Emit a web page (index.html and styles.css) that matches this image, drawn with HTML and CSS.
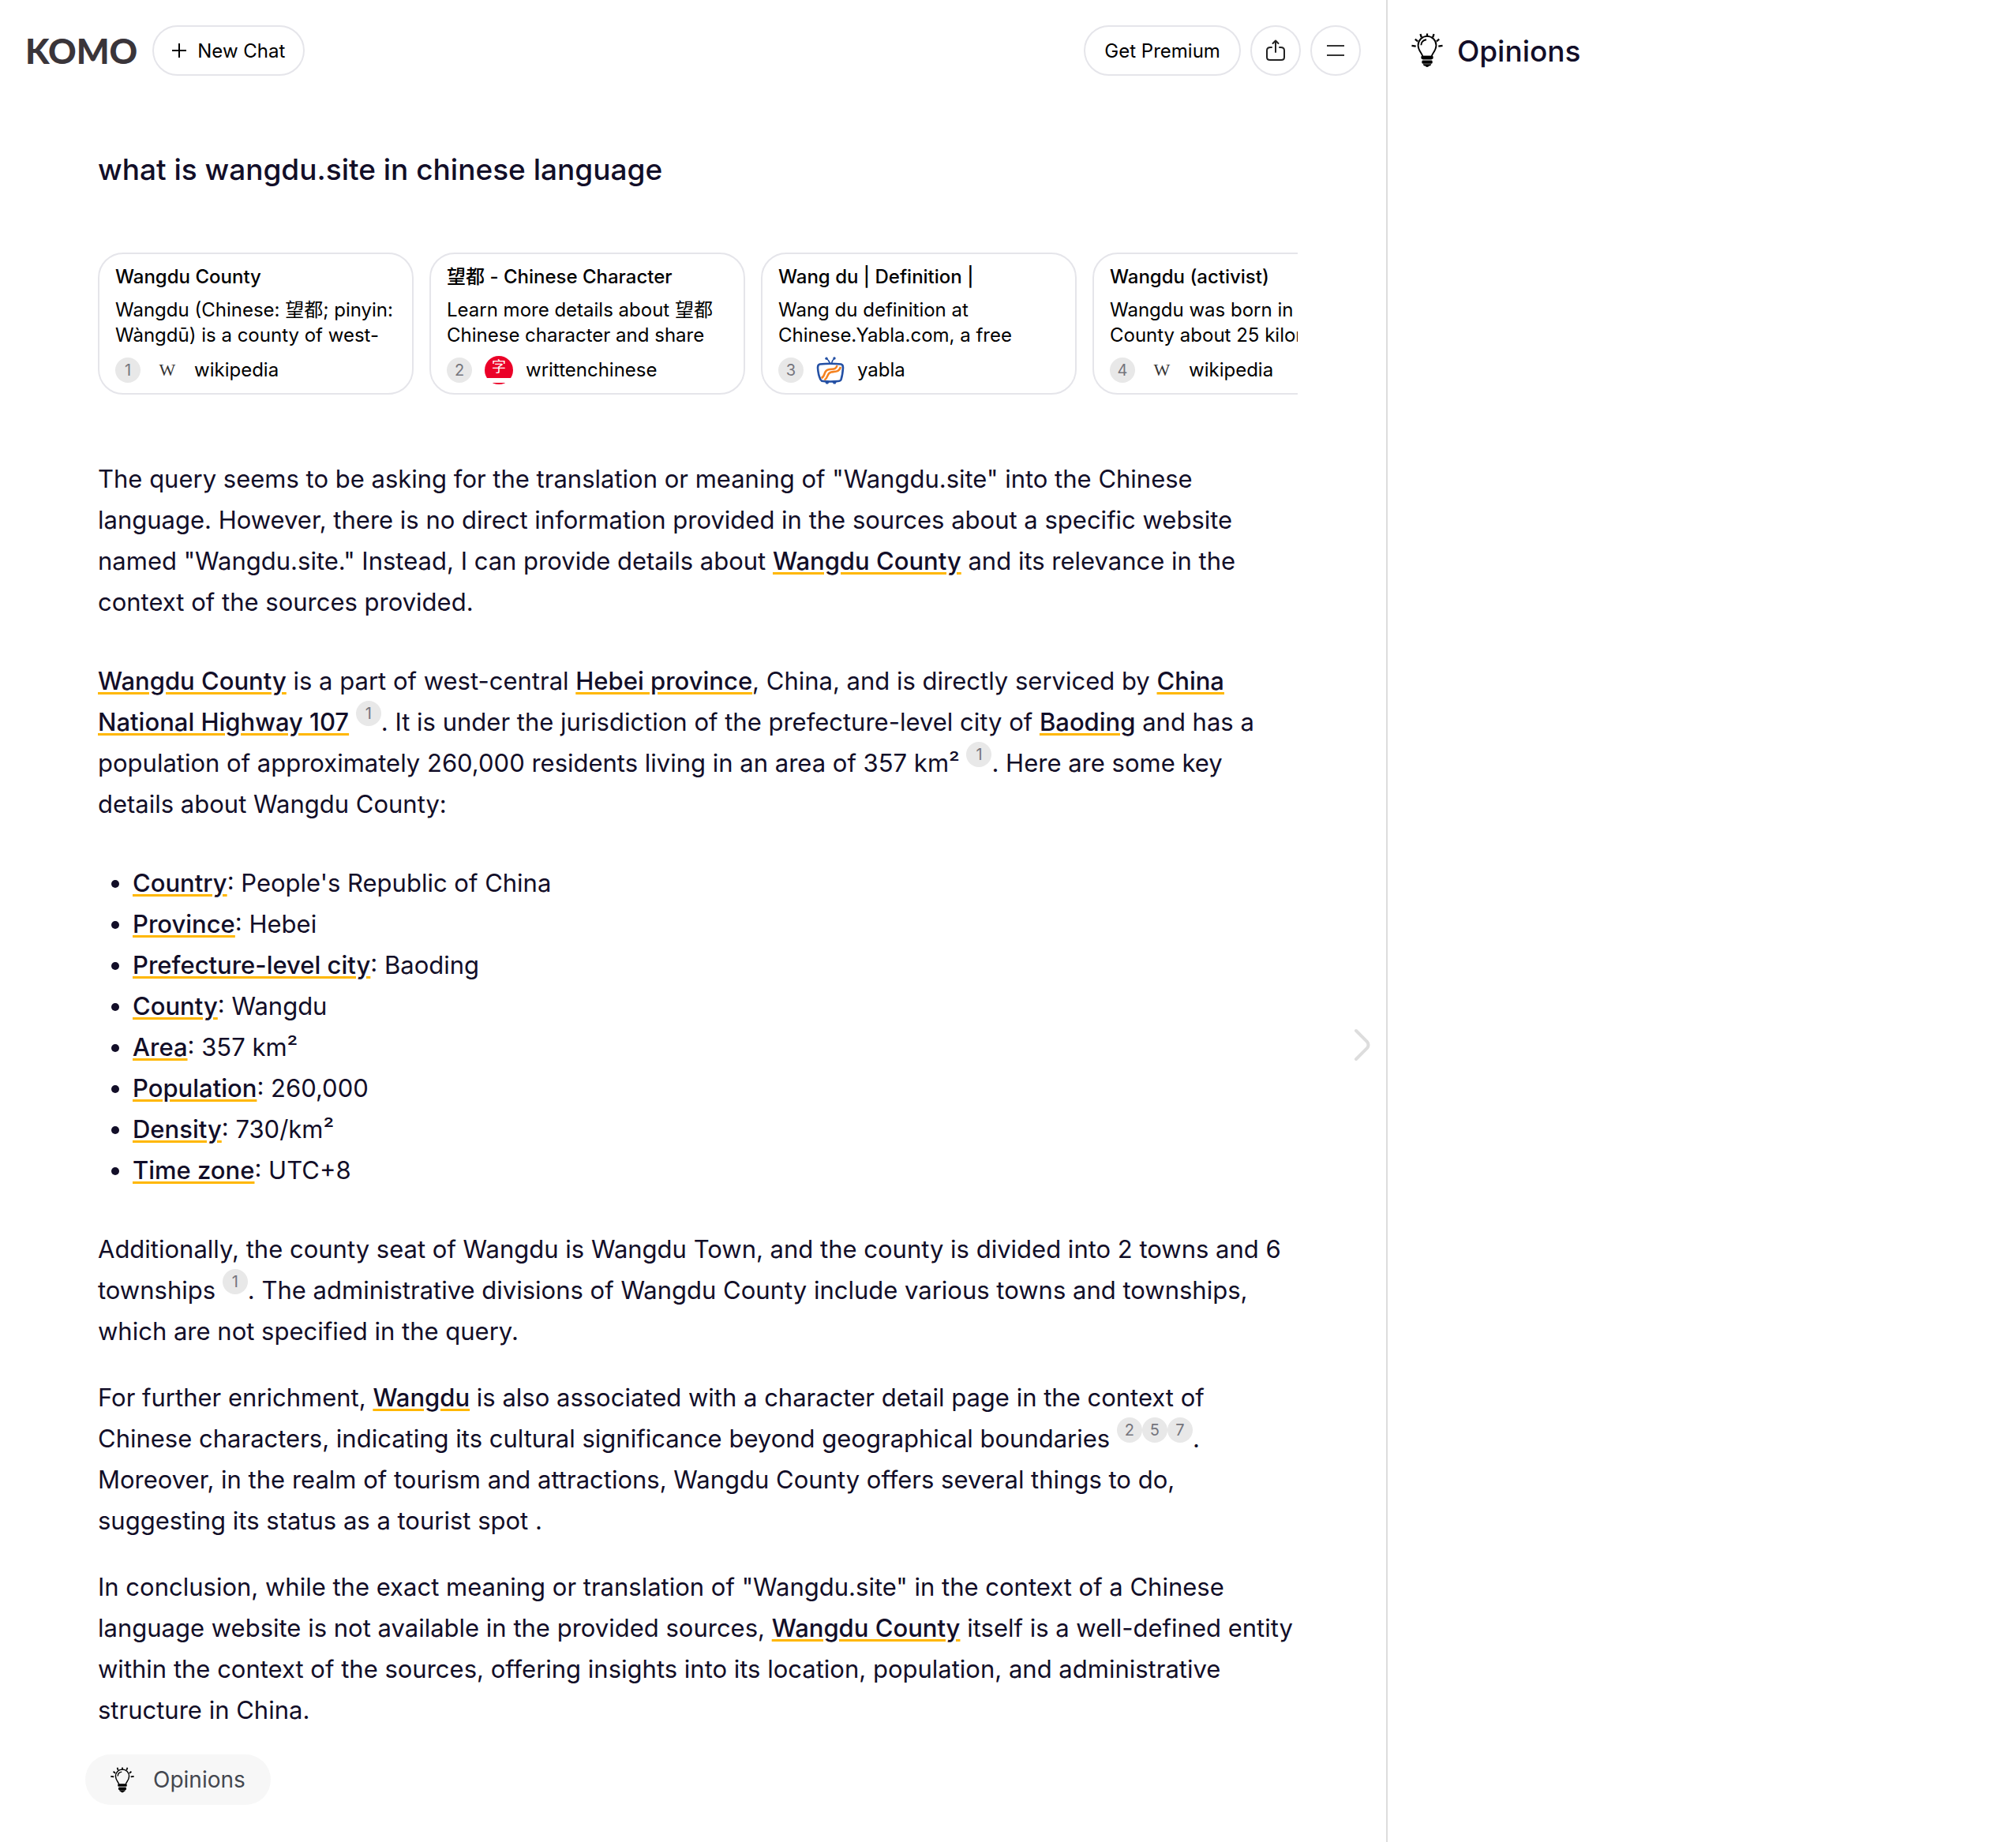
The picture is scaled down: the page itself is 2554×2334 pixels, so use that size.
FILE: index.html
```html
<!DOCTYPE html>
<html lang="en">
<head>
<meta charset="utf-8">
<meta name="viewport" content="width=device-width, initial-scale=1">
<title>what is wangdu.site in chinese language - Komo</title>
<link rel="stylesheet" href="styles.css">
</head>
<body>
<svg class="defs" aria-hidden="true">
  <symbol id="bulb" viewBox="0 0 42 46">
    <g fill="none" stroke="#000" stroke-width="2">
      <path d="M15 31c0-4-6-7-6-15a12 12 0 0 1 24 0c0 8-6 11-6 15z"/>
      <path d="M13 16c0-4 3-7 7-7.500"/>
      <path stroke-width="2.400" d="M21 .5v4M12 1l1.500 4.500M30 1l-1.500 4.500M5 8l3.500 2.800M37 8l-3.500 2.800M.5 16.500l5.500.8M41.500 16.500l-5.500.8"/>
    </g>
    <rect x="13" y="30" width="16" height="4.500" rx="1.500"/>
    <rect x="14" y="36" width="14" height="4.500" rx="1.500"/>
    <path d="M15.500 41h11c-.5 2-2 2.600-3 2.600-.6 1.800-4.400 1.800-5 0-1 0-2.500-.6-3-2.600z"/>
    <path d="M15 35.200h12" stroke="#888" stroke-width="1.400"/>
  </symbol>
</svg>
<div class="page">
  <main class="main">
    <header class="topbar">
      <a class="logo" href="#">KOMO</a>
      <button class="btn btn-new" type="button">
        <svg width="18" height="18" viewBox="0 0 18 18" aria-hidden="true"><path d="M9 0v18M0 9h18" stroke="#000" stroke-width="2"/></svg>
        New Chat
      </button>
      <div class="actions">
        <button class="btn" type="button">Get Premium</button>
        <button class="btn btn-icon" type="button" aria-label="Share">
          <svg width="26" height="28" viewBox="0 0 26 28" fill="none" stroke="#222" stroke-width="2" stroke-linecap="round" stroke-linejoin="round" aria-hidden="true"><path d="M8 10H6.500C3.500 10 2 11.500 2 14v8.500C2 25 3.500 26 6 26h14c2.500 0 4-1 4-3.500V14c0-2.500-1.500-4-4.500-4H18M13 16V1.500M9.500 5L13 1.500 16.500 5"/></svg>
        </button>
        <button class="btn btn-icon" type="button" aria-label="Menu">
          <svg width="22" height="14" viewBox="0 0 22 14" aria-hidden="true"><path d="M0 1h22M0 13h22" stroke="#333" stroke-width="2"/></svg>
        </button>
      </div>
    </header>

    <article class="answer">
      <h1 class="question">what is wangdu.site in chinese language</h1>

      <div class="sources">
        <section class="card">
          <h2 class="card-title">Wangdu County</h2>
          <p class="card-text">Wangdu (Chinese: 望都; pinyin:<br>Wàngdū) is a county of west-</p>
          <div class="card-source"><span class="num">1</span><span class="favicon favicon-w">W</span><span>wikipedia</span></div>
        </section>
        <section class="card">
          <h2 class="card-title">望都 - Chinese Character</h2>
          <p class="card-text">Learn more details about 望都<br>Chinese character and share</p>
          <div class="card-source"><span class="num">2</span><span class="favicon favicon-zi"><span class="zi">字</span></span><span>writtenchinese</span></div>
        </section>
        <section class="card">
          <h2 class="card-title">Wang du | Definition |</h2>
          <p class="card-text">Wang du definition at<br>Chinese.Yabla.com, a free</p>
          <div class="card-source"><span class="num">3</span>
            <svg class="favicon" width="36" height="36" viewBox="0 0 36 36" fill="none" aria-hidden="true">
              <path d="M4.500 10.500Q18 9 31.500 10.500Q34 11 34 15Q33.500 24 31.500 30Q30.500 32 27.500 32Q18 33 9 32Q6.500 32 5.500 30Q2.500 24 2 15Q2 11 4.500 10.500z" stroke="#2450a4" stroke-width="2.600"/>
              <path d="M17.500 9.500Q16.500 6 13 3M19.500 9.500Q20 6 23 3" stroke="#2450a4" stroke-width="1.600"/>
              <circle cx="13" cy="3.300" r="1.700" fill="#2450a4"/><circle cx="23" cy="3" r="1.700" fill="#2450a4"/>
              <path d="M11 32.500h6l-2 3h-2.500zM20 32.500h6l-1.500 3H22z" fill="#2450a4"/>
              <path d="M6.500 28C12 26 9 19 15 17.500C21 16 25 18 26.500 12M10.500 30.500C16 27 13 22 19 20.500C26 19.500 29 20 31 14" stroke="#f58220" stroke-width="2.600"/>
            </svg>
            <span>yabla</span></div>
        </section>
        <section class="card">
          <h2 class="card-title">Wangdu (activist)</h2>
          <p class="card-text">Wangdu was born in the<br>County about 25 kilometers</p>
          <div class="card-source"><span class="num">4</span><span class="favicon favicon-w">W</span><span>wikipedia</span></div>
        </section>
      </div>

      <div class="prose">
        <p class="wide">The query seems to be asking for the translation or meaning of "Wangdu.site" into the Chinese<br>language. However, there is no direct information provided in the sources about a specific website<br>named "Wangdu.site." Instead, I can provide details about <a href="#">Wangdu County</a> and its relevance in the<br>context of the sources provided.</p>
        <p class="wide"><a href="#">Wangdu County</a> is a part of west-central <a href="#">Hebei province</a>, China, and is directly serviced by <a href="#">China<br>National Highway 107</a> <span class="num cite">1</span>. It is under the jurisdiction of the prefecture-level city of <a href="#">Baoding</a> and has a<br>population of approximately 260,000 residents living in an area of 357 km² <span class="num cite">1</span>. Here are some key<br>details about Wangdu County:</p>
        <ul class="wide">
          <li><a href="#">Country</a>: People's Republic of China</li>
          <li><a href="#">Province</a>: Hebei</li>
          <li><a href="#">Prefecture-level city</a>: Baoding</li>
          <li><a href="#">County</a>: Wangdu</li>
          <li><a href="#">Area</a>: 357 km²</li>
          <li><a href="#">Population</a>: 260,000</li>
          <li><a href="#">Density</a>: 730/km²</li>
          <li><a href="#">Time zone</a>: UTC+8</li>
        </ul>
        <p>Additionally, the county seat of Wangdu is Wangdu Town, and the county is divided into 2 towns and 6<br>townships <span class="num cite">1</span>. The administrative divisions of Wangdu County include various towns and townships,<br>which are not specified in the query.</p>
        <p>For further enrichment, <a href="#">Wangdu</a> is also associated with a character detail page in the context of<br>Chinese characters, indicating its cultural significance beyond geographical boundaries <span class="num cite">2</span><span class="num cite">5</span><span class="num cite">7</span>.<br>Moreover, in the realm of tourism and attractions, Wangdu County offers several things to do,<br>suggesting its status as a tourist spot .</p>
        <p>In conclusion, while the exact meaning or translation of "Wangdu.site" in the context of a Chinese<br>language website is not available in the provided sources, <a href="#">Wangdu County</a> itself is a well-defined entity<br>within the context of the sources, offering insights into its location, population, and administrative<br>structure in China.</p>
      </div>

      <button class="pill" type="button"><svg width="30" height="33" aria-hidden="true"><use href="#bulb"/></svg>Opinions</button>
    </article>

    <button class="collapse" type="button" aria-label="Collapse panel">
      <svg width="22" height="42" viewBox="0 0 22 42" fill="none" stroke="#ddd" stroke-width="4" stroke-linecap="round" aria-hidden="true"><path d="M3 3L17 17Q20 21 17 25L3 39"/></svg>
    </button>
  </main>

  <aside class="side">
    <svg width="40" height="44" aria-hidden="true"><use href="#bulb"/></svg>
    <h2 class="side-title">Opinions</h2>
  </aside>
</div>
</body>
</html>
```
FILE: styles.css
```css
* { box-sizing: border-box; }

body {
  margin: 0;
  background: #fff;
  color: #000;
  font-family: Inter, "Noto Sans CJK SC", sans-serif;
  font-size: 24px;
}

h1, h2, p, ul { margin: 0; }

button {
  font: inherit;
  color: inherit;
  cursor: pointer;
}

.defs { position: absolute; width: 0; height: 0; }

.page {
  display: grid;
  grid-template-columns: calc(68.75% + 2px) 1fr;
  min-height: 100vh;
}

.main {
  position: relative;
  min-width: 0;
  border-right: 2px solid #ddd;
}

/* Top bar */
.topbar {
  display: flex;
  align-items: center;
  padding: 32px;
}

.logo {
  margin-right: 19px;
  color: #3a353a;
  font-family: Lato, sans-serif;
  font-size: 44px;
  font-weight: 900;
  line-height: 64px;
  text-decoration: none;
}

.actions {
  display: flex;
  gap: 12px;
  margin-left: auto;
}

.btn {
  display: flex;
  align-items: center;
  justify-content: center;
  height: 64px;
  padding: 0 24px;
  border: 2px solid #e5e5ea;
  border-radius: 32px;
  background: #fff;
  white-space: nowrap;
}

.btn-new {
  gap: 14px;
  padding: 0 23px;
}

.btn-icon {
  width: 64px;
  padding: 0;
}

/* Answer column */
.answer { padding: 55px 112px 46px 124px; }

.question {
  color: #120e28;
  font-size: 37px;
  font-weight: 500;
  line-height: 64px;
}

.sources {
  display: flex;
  gap: 20px;
  margin-top: 73px;
  overflow: hidden;
}

.card {
  flex: none;
  width: 400px;
  padding: 13px 20px 11px;
  border: 2px solid #e5e5ea;
  border-radius: 32px;
  line-height: 32px;
  white-space: nowrap;
}

.card-title {
  margin-bottom: 10px;
  font-size: 24px;
  font-weight: 500;
}

.card-source {
  display: flex;
  align-items: center;
  gap: 16px;
  height: 36px;
  margin-top: 10px;
}

.num {
  display: inline-block;
  width: 32px;
  height: 32px;
  border-radius: 50%;
  background: #e8e8e8;
  color: #75757d;
  font-size: 20px;
  line-height: 32px;
  text-align: center;
}

.favicon {
  flex: none;
  width: 36px;
  height: 36px;
  text-align: center;
}

.favicon-w {
  color: #333;
  font-family: "Liberation Serif", serif;
  font-size: 22px;
  line-height: 36px;
}

.favicon-zi {
  overflow: hidden;
  border-radius: 50%;
  background: linear-gradient(#eb0028 28px, #fff 28px, #fff 34px, #eb0028 34px);
}

.zi {
  display: block;
  color: #fff;
  font-size: 18px;
  line-height: 28px;
}

/* Answer text */
.prose {
  margin-top: 81px;
  color: #120e28;
  font-size: 31px;
  line-height: 52px;
  white-space: nowrap;
}

.prose > * + * { margin-top: 32px; }
.prose > .wide + * { margin-top: 48px; }

.prose a {
  color: inherit;
  font-weight: 500;
  text-decoration: underline #ffb700 3px;
  text-underline-offset: 3px;
}

.prose ul { padding-left: 44px; }

.cite {
  margin: -8px 0;
  vertical-align: 15px;
}

.pill {
  display: flex;
  align-items: center;
  gap: 24px;
  height: 64px;
  margin: 30px 0 0 -16px;
  padding: 0 32px;
  border: 0;
  border-radius: 32px;
  background: #f7f7f7;
  color: #44474f;
  font-size: 28px;
}

.collapse {
  position: absolute;
  top: 1303px;
  right: 19px;
  padding: 0;
  border: 0;
  background: none;
}

/* Side panel */
.side {
  display: flex;
  align-items: center;
  gap: 18px;
  height: 128px;
  padding: 0 30px;
}

.side-title {
  color: #120e28;
  font-size: 37px;
  font-weight: 500;
}
```
